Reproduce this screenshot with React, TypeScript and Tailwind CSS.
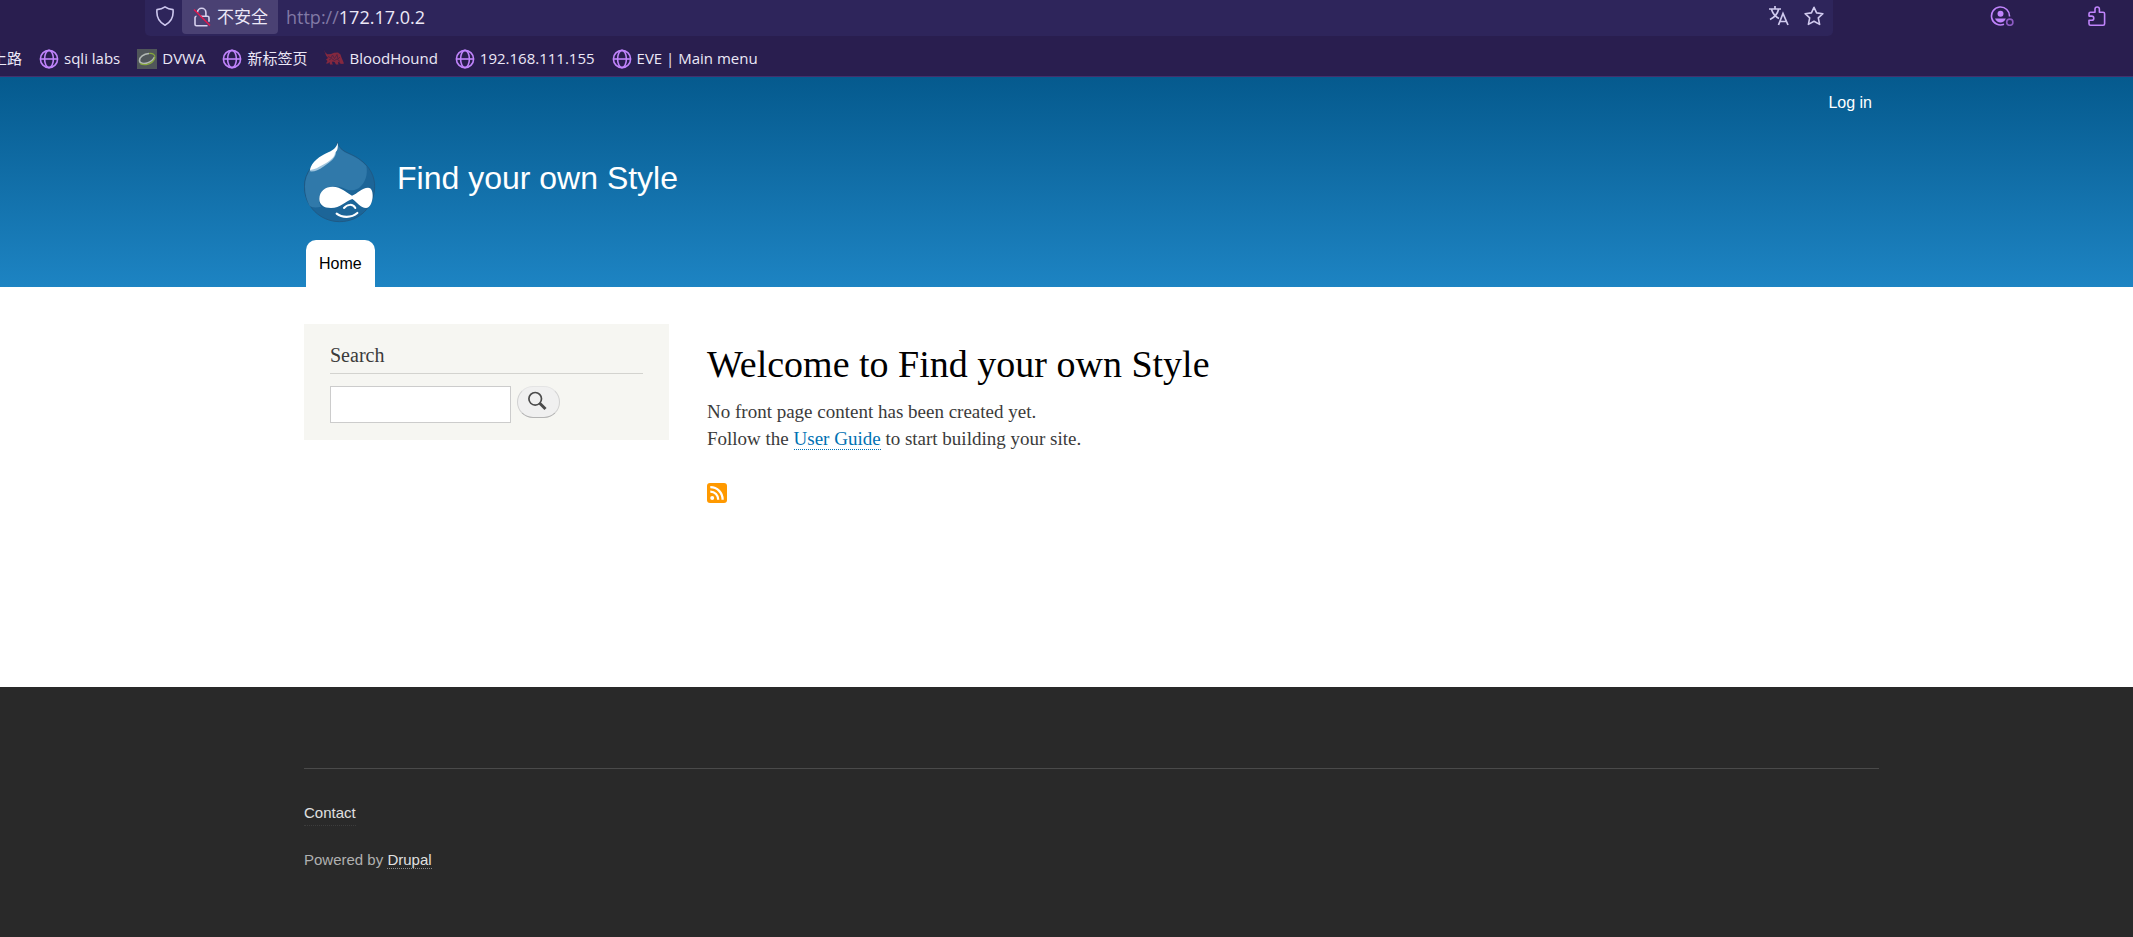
import type { ReactNode } from "react";

function Globe() {
  return (
    <svg viewBox="0 0 20 20" className="size-5 shrink-0" fill="none" stroke="#c084fc" strokeWidth="1.6" aria-hidden="true">
      <circle cx="10" cy="10" r="8.6" />
      <ellipse cx="10" cy="10" rx="4.4" ry="8.6" />
      <path d="M1.4 10h17.2" />
    </svg>
  );
}

function DvwaIcon() {
  return (
    <svg viewBox="0 0 20 20" className="size-5 shrink-0" fill="none" aria-hidden="true">
      <rect width="20" height="20" fill="#50565a" />
      <path d="M12 4.500C6.500 5 2.500 8 2.500 11.500c0 3.200 4.500 3.800 8.500 2.200 3-1.200 5.500-3 6.500-5.700" stroke="#b3b9b6" strokeWidth="1.600" />
      <path d="M3 14.500c4 2.500 13 1 14.800-5.500.8-3.500-2.300-5-5.800-4.500" stroke="#86a83c" strokeWidth="1.200" />
    </svg>
  );
}

function HoundIcon() {
  return (
    <svg viewBox="0 0 20 20" className="size-5 shrink-0" fill="none" aria-hidden="true">
      <path
        d="M0 .8l1.500 3 2 1.400L7 5l3-1.200 4-.3 2.500 2 1 3 1.500 3.500 1 2.500-2 .5-2-.5-1-2-1 1 .5 2h-2.500L10.500 13l-2-.5L8 14l1 1.500H6L5.500 13 4 14.500H2L3.500 12 2 10.500 4 9 2 6.500z"
        fill="#84283f"
      />
      <path d="M4 7.500L7 9l1.500-3 2 3.500 2.500-4 1 4.500 2-2M5 11l2.500-1.500 3 2 2.500-1.500 3 2.500" stroke="#4c2247" strokeWidth=".9" />
    </svg>
  );
}

function Bookmark({ icon, children }: { icon?: ReactNode; children: ReactNode }) {
  return (
    <a href="#" className="flex items-center gap-[5px] whitespace-nowrap">
      {icon}
      <span className="-mt-0.5">{children}</span>
    </a>
  );
}

function BrowserBar() {
  return (
    <div className="border-b border-[#43306d] bg-[#291e4f] font-['Open_Sans','Noto_Sans_CJK_SC',sans-serif] text-[#ece8f7]">
      <div className="flex h-9 items-start pr-[26px] pl-[145px]">
        <div className="flex h-9 flex-1 items-start rounded-b-[5px] bg-[#2e255b] pr-[9px] pl-2.5">
          <button aria-label="Tracking protection" className="mt-1.5 mr-[7px]">
            <svg viewBox="0 0 20 20" className="size-5" fill="none" stroke="#cdc7ee" strokeWidth="1.6" strokeLinejoin="round" aria-hidden="true">
              <path d="M10 .9c2.500 1.800 5 2.500 8 2.700.7 6.400-1.500 12.400-8 15.600C3.500 16 1.300 10 2 3.600c3-.2 5.500-.9 8-2.700z" />
            </svg>
          </button>
          <button className="flex h-[34px] items-center gap-[5px] rounded-b bg-[#4a4173] px-2.5 text-[17px] leading-[34px] whitespace-nowrap">
            <svg viewBox="0 0 20 20" className="size-5" fill="none" stroke="#d6d0ee" strokeWidth="1.6" aria-hidden="true">
              <path d="M5.500 5.500a4.200 4.200 0 0 1 8.400 0v3.800M8 9.300h7.500a1.500 1.500 0 0 1 1.500 1.500v4M15.500 18.700H4.500A1.500 1.500 0 0 1 3 17.200v-6.400a1.500 1.500 0 0 1 1.500-1.500" />
              <path d="M2 2.500l16 16" stroke="#e3184d" />
            </svg>
            <span className="-mt-px">不安全</span>
          </button>
          <div className="ml-2 flex-1 text-lg leading-[34px]">
            <span className="text-[#8179a5]">http://</span>172.17.0.2
          </div>
          <div className="mt-1.5 flex items-center gap-[15px]">
            <button aria-label="Translate">
              <svg viewBox="0 0 20 20" className="size-5" fill="none" stroke="#d0caee" strokeWidth="1.7" aria-hidden="true">
                <path d="M0 3h12M6 0v3M2.500 3.500C4 8 7 11 10 12.500M9.500 3.500C8.500 8 5 11.500 1 13.500M9.500 19l4.500-11.500L19 19M11 15.500h6.500" />
              </svg>
            </button>
            <button aria-label="Bookmark this page">
              <svg viewBox="0 0 20 20" className="size-5" fill="none" stroke="#d0caee" strokeWidth="1.6" strokeLinejoin="round" aria-hidden="true">
                <path d="M10 1.300l2.600 5.600 6.300.8-4.600 4.200 1.300 6.500L10 15.300l-5.600 3.100 1.300-6.500L1.100 7.700l6.300-.8z" />
              </svg>
            </button>
          </div>
        </div>
        <div className="mt-1.5 ml-[157px] flex items-center gap-[73px]">
          <button aria-label="Account">
            <svg viewBox="0 0 24 20" className="h-5 w-6" fill="none" stroke="#c084fc" strokeWidth="1.6" aria-hidden="true">
              <path d="M14 18.300A9 9 0 1 1 19.500 10.500" />
              <circle cx="10.500" cy="7.700" r="3" fill="#c084fc" stroke="none" />
              <path d="M5 12.500h10.800c-1 2.500-3 4-5.300 4s-4.500-1.500-5.500-4z" fill="#c084fc" stroke="none" />
              <circle cx="19.800" cy="16.200" r="3.100" stroke="#8d5bc4" />
            </svg>
          </button>
          <button aria-label="Extensions">
            <svg viewBox="0 0 20 20" className="size-5" fill="none" stroke="#c084fc" strokeWidth="1.6" strokeLinejoin="round" aria-hidden="true">
              <path d="M3.500 6.300H8V3.200a2.200 2.200 0 0 1 4.400 0v3.100h3.700a1.500 1.500 0 0 1 1.500 1.500v9.900a1.500 1.500 0 0 1-1.500 1.500H3.500A1.500 1.500 0 0 1 2 17.700v-3.400h2.700a2.100 2.100 0 0 0 0-4.200H2V7.800a1.500 1.500 0 0 1 1.500-1.500z" />
            </svg>
          </button>
        </div>
      </div>
      <nav aria-label="Bookmarks" className="flex h-10 items-center gap-[17px] overflow-hidden pt-1.5 text-[15px]">
        <div className="-ml-2">
          <Bookmark>上路</Bookmark>
        </div>
        <Bookmark icon={<Globe />}>sqli labs</Bookmark>
        <Bookmark icon={<DvwaIcon />}>DVWA</Bookmark>
        <Bookmark icon={<Globe />}>新标签页</Bookmark>
        <Bookmark icon={<HoundIcon />}>BloodHound</Bookmark>
        <Bookmark icon={<Globe />}>192.168.111.155</Bookmark>
        <Bookmark icon={<Globe />}>EVE | Main menu</Bookmark>
      </nav>
    </div>
  );
}

function DrupalLogo() {
  return (
    <svg viewBox="42 36 216 243" className="h-[81px] w-[72px] shrink-0" role="img" aria-label="Home">
      <path
        d="M142 37c3 14 14 24 34 33 44 18 78 52 78 99 0 62-47 106-105 106S43 229 43 169c0-42 30-75 68-92 20-10 30-20 31-40z"
        fill="#1c6598"
        stroke="#21577f"
        strokeWidth="2.500"
      />
      <path
        d="M142 40c4 14 16 25 34 32 22 9 40 21 53 36 5 24-2 50-22 66-14 8-27 10-42 2-24-12-60-8-72 12-8 14-8 28 0 42-16 4-28 2-34-2-8-16-14-36-14-58 0-42 28-73 66-91 20-10 30-21 31-39z"
        fill="#3079aa"
      />
      <path d="M59 124c6-28 34-40 55-50 10-5 18-9 24-10 2 18-18 34-38 46-14 10-28 16-41 14z" fill="#a0c5de" />
      <path d="M143 38c2 18-2 25-8 30 0 14-18 26-36 36-14 8-24 14-39 16 4-24 30-42 55-53 16-8 24-14 28-29z" fill="#fff" />
      <path
        d="M88 207c0-24 18-37 40-37 25 0 43 19 58 27 16-6 30-24 48-24 10 0 14 10 14 24 0 18-8 37-20 37-16 0-27-18-41-27-20 6-36 27-64 27-22 0-35-10-35-27z"
        fill="#fff"
      />
      <path d="M162 234c10-12 27-13 34 0" fill="none" stroke="#fff" strokeWidth="6" strokeLinecap="round" />
      <path d="M140 251c15 12 44 14 62-2" fill="none" stroke="#fff" strokeWidth="6.500" strokeLinecap="round" />
    </svg>
  );
}

function SiteHeader() {
  return (
    <header className="bg-linear-to-b from-[#055a8e] to-[#1d84c3] pr-[254px] pl-[304px] font-['Liberation_Sans',Arial,sans-serif] text-white">
      <div className="flex justify-end pt-[14px] pr-[7px]">
        <a href="#" className="text-base">Log in</a>
      </div>
      <div className="mt-[27px] flex items-start gap-[21px]">
        <a href="#"><DrupalLogo /></a>
        <a href="#" className="mt-4 text-[32px] leading-10">Find your own Style</a>
      </div>
      <nav aria-label="Main" className="mt-[17px] flex pl-0.5">
        <a href="#" className="rounded-t-[10px] bg-white px-[13px] text-base leading-[47px] text-black">Home</a>
      </nav>
    </header>
  );
}

function SearchBlock() {
  return (
    <aside className="w-[365px] shrink-0 self-start bg-[#f6f6f2] px-[26px] pt-[15px] pb-[17px]">
      <h2 className="border-b border-[#d3d3cf] pt-1 pb-1.5 text-xl leading-6 text-[#3b3b3b]">
        <label htmlFor="search">Search</label>
      </h2>
      <form className="mt-3 flex items-start gap-1.5" onSubmit={(e) => e.preventDefault()}>
        <input id="search" type="search" className="h-[37px] w-[181px] border border-[#ccc] bg-white px-1 outline-none" />
        <button
          type="submit"
          aria-label="Search"
          className="flex h-8 w-[43px] items-center justify-center rounded-full border border-[#d2d2d2] border-t-[#e4e4e4] border-b-[#b4b4b4] bg-[#f0f0f0]"
        >
          <svg viewBox="0 0 20 20" className="mr-1 mb-0.5 size-5" fill="none" stroke="#4b4b4b" aria-hidden="true">
            <circle cx="8.200" cy="7.800" r="6.300" strokeWidth="1.700" />
            <path d="M12.500 12l6 6" strokeWidth="3" />
          </svg>
        </button>
      </form>
    </aside>
  );
}

function RssIcon() {
  return (
    <svg viewBox="0 0 20 20" className="size-5" fill="none" aria-hidden="true">
      <rect width="20" height="20" rx="3" fill="#ff9900" />
      <circle cx="5.200" cy="15" r="2" fill="#fff" />
      <path d="M3.300 8.600a7.800 7.800 0 0 1 7.900 8.200M3.300 4.200a12.200 12.200 0 0 1 12.300 12.600" stroke="#fff" strokeWidth="2.300" />
    </svg>
  );
}

export default function App() {
  return (
    <div className="flex min-h-screen flex-col bg-white">
      <BrowserBar />
      <SiteHeader />
      <div className="flex gap-[38px] pt-[37px] pr-[254px] pb-[184px] pl-[304px] font-['Liberation_Serif',Georgia,serif]">
        <SearchBlock />
        <main className="flex-1 pt-4">
          <h1 className="text-[38px] leading-[48px] text-black">Welcome to Find your own Style</h1>
          <div className="mt-2.5 text-[19px] leading-[27px] text-[#3b3b3b]">
            <p>No front page content has been created yet.</p>
            <p>
              Follow the{" "}
              <a href="#" className="border-b border-dotted border-[#0071b3] text-[#0071b3]">User Guide</a> to start building your site.
            </p>
          </div>
          <a href="#" aria-label="Subscribe to RSS feed" className="mt-[31px] block w-5">
            <RssIcon />
          </a>
        </main>
      </div>
      <footer className="flex-1 bg-[#292929] pt-[81px] pr-[254px] pl-[304px] font-['Liberation_Sans',Arial,sans-serif] text-[15px] leading-6 text-[#b0b0b0]">
        <div className="border-t border-[#4a4a4a] pt-8">
          <p>
            <a href="#" className="border-b border-dotted border-[#3d3d3d] pb-1 text-[#e0e0e0]">Contact</a>
          </p>
          <p className="mt-[23px]">
            Powered by <a href="#" className="border-b border-dotted border-[#8c8c8c] text-[#e0e0e0]">Drupal</a>
          </p>
        </div>
      </footer>
    </div>
  );
}
